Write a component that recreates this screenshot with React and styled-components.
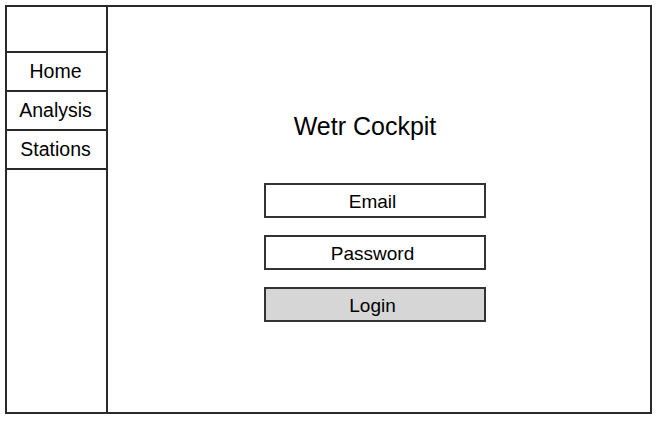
import styled, { createGlobalStyle } from 'styled-components';

const GlobalStyle = createGlobalStyle`
  body {
    margin: 0;
    background: #ffffff;
    font-family: "Liberation Sans", Arial, sans-serif;
    color: #000;
  }
`;

const Page = styled.div`
  padding: 5px 0 0 5px;
`;

const Frame = styled.div`
  box-sizing: border-box;
  width: 647px;
  height: 409px;
  border: 2px solid #2a2a2a;
  display: flex;
`;

const Sidebar = styled.nav`
  box-sizing: border-box;
  width: 101px;
  border-right: 2px solid #2a2a2a;
  display: flex;
  flex-direction: column;
`;

const SideHeader = styled.div`
  height: 44px;
  border-bottom: 2px solid #2a2a2a;
`;

const NavItem = styled.a`
  height: 37px;
  border-bottom: 2px solid #2a2a2a;
  display: flex;
  align-items: center;
  justify-content: center;
  padding-right: 2px;
  font-size: 19.5px;
  color: #000;
  text-decoration: none;
`;

const Content = styled.main`
  flex: 1;
  display: flex;
  flex-direction: column;
  align-items: center;
  padding-top: 104px;
  padding-right: 9px;
`;

const Title = styled.h1`
  margin: 0 19px 42px 0;
  font-size: 25px;
  font-weight: normal;
  line-height: 30px;
`;

const Form = styled.form`
  display: flex;
  flex-direction: column;
  gap: 17px;
  width: 222px;
`;

const Field = styled.div`
  box-sizing: border-box;
  height: 35px;
  padding: 3px 4px 0 0;
  border: 2px solid #333;
  background: ${p => (p.$button ? '#d6d6d6' : '#fff')};
  display: flex;
  align-items: center;
  justify-content: center;
  font-size: 19px;
`;

export default function App() {
  return (
    <>
      <GlobalStyle />
      <Page>
        <Frame>
          <Sidebar>
            <SideHeader />
            <NavItem>Home</NavItem>
            <NavItem>Analysis</NavItem>
            <NavItem>Stations</NavItem>
          </Sidebar>
          <Content>
            <Title>Wetr Cockpit</Title>
            <Form>
              <Field>Email</Field>
              <Field>Password</Field>
              <Field $button>Login</Field>
            </Form>
          </Content>
        </Frame>
      </Page>
    </>
  );
}
